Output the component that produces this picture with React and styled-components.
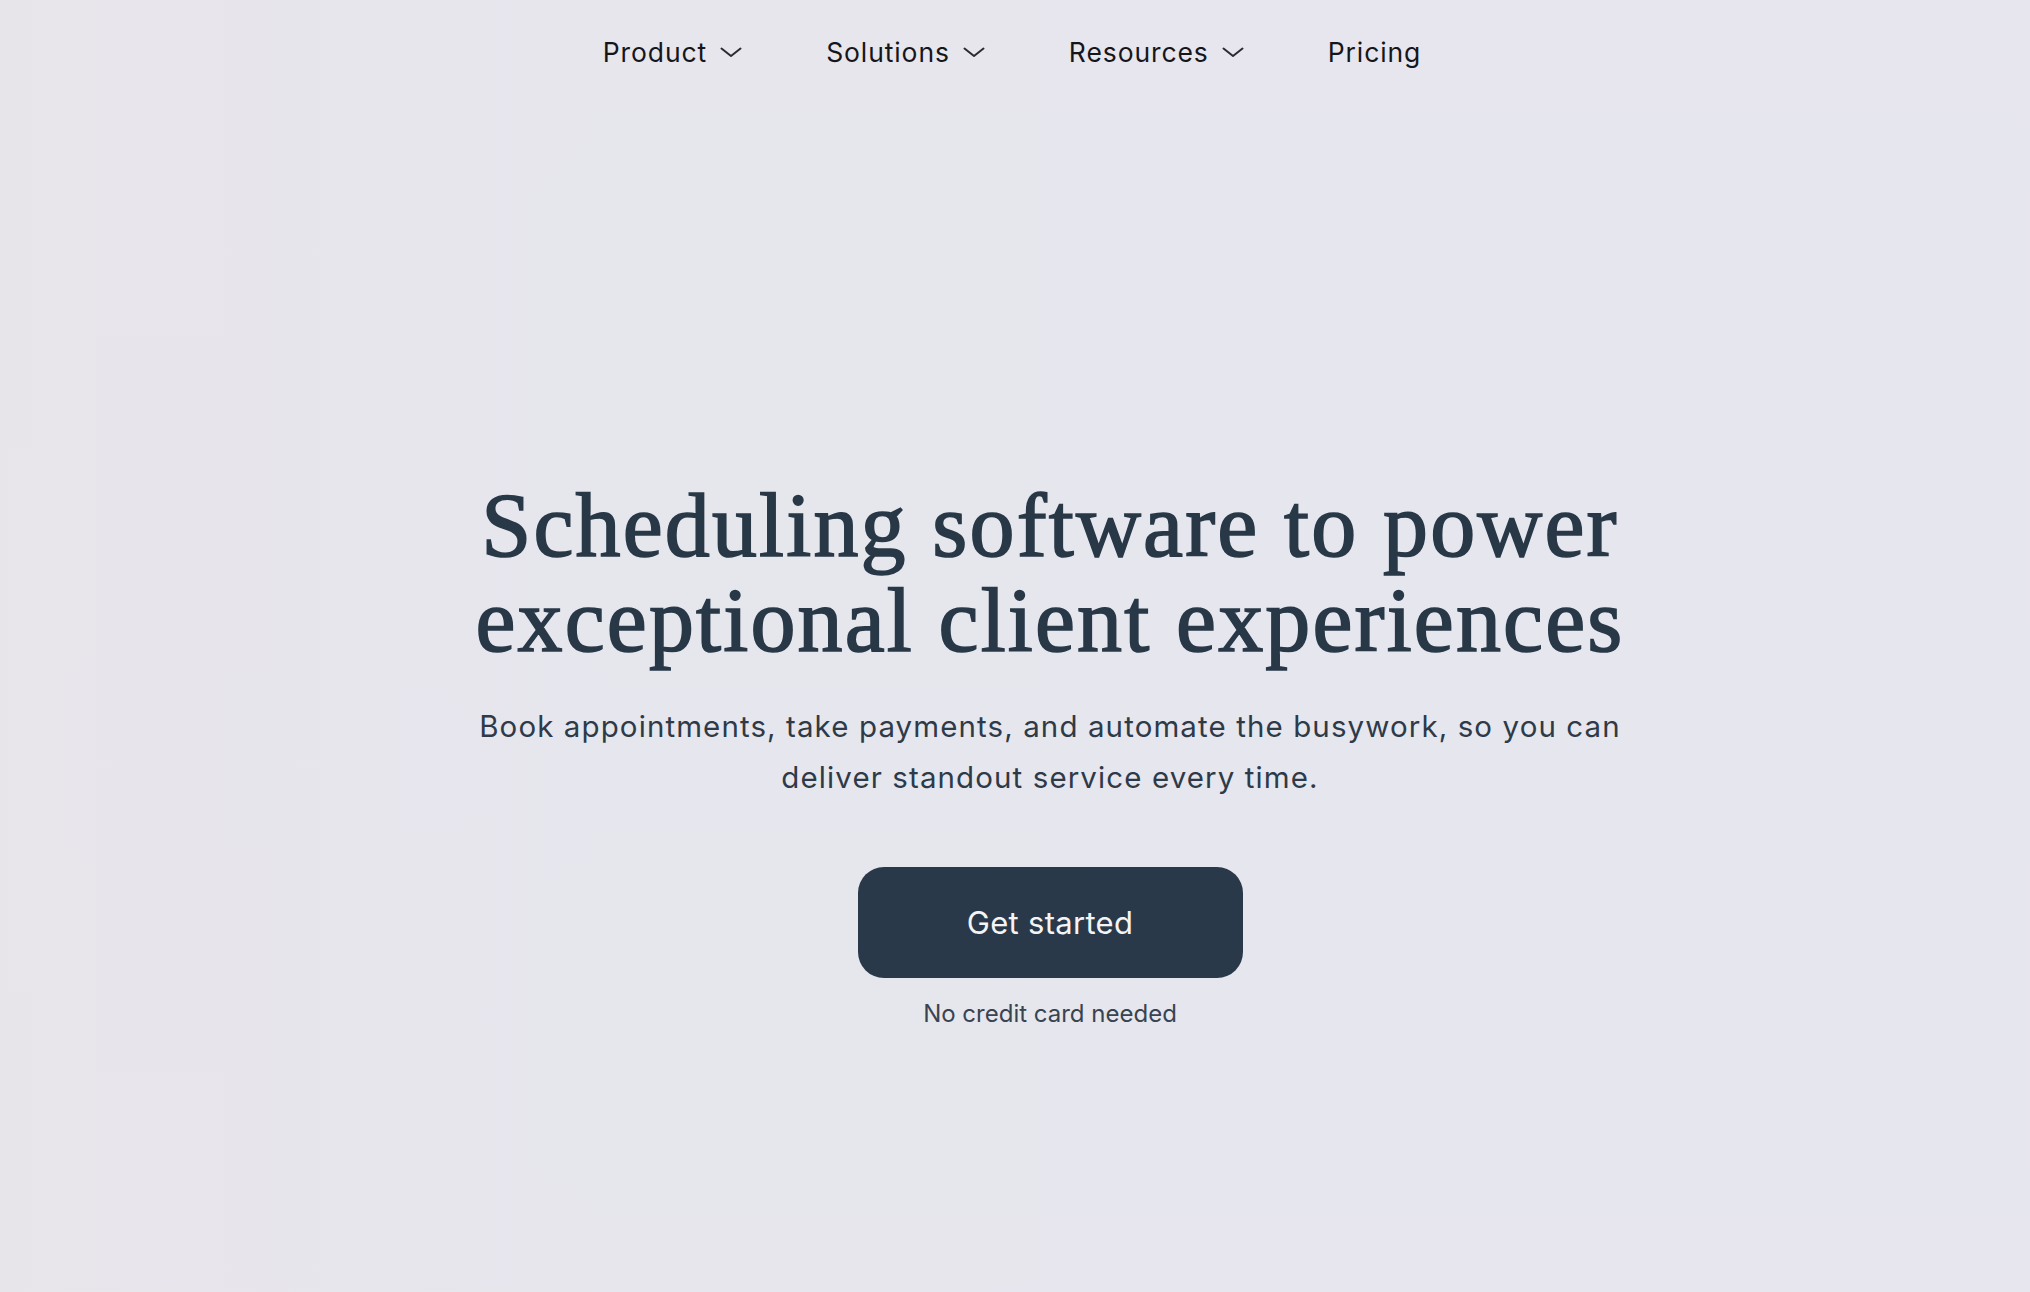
import React from 'react';
import styled, { createGlobalStyle } from 'styled-components';

const GlobalStyle = createGlobalStyle`
    html, body {
        margin: 0;
        padding: 0;
    }
    body {
        font-family: Inter, 'Noto Sans', sans-serif;
        background: #e6e5ee;
    }
    * {
        box-sizing: border-box;
    }
`;

const navItems = [
    { label: 'Product', menu: true },
    { label: 'Solutions', menu: true },
    { label: 'Resources', menu: true },
    { label: 'Pricing', menu: false },
];

const Chevron = () => (
    <svg width='22' height='11' viewBox='0 0 22 11' fill='none'>
        <path
            d='M1.5 1.5 L11 9 L20.5 1.5'
            stroke='#2b2b30'
            strokeWidth='2'
            strokeLinecap='round'
            strokeLinejoin='round'
        />
    </svg>
);

const App = () => {
    return (
        <Page>
            <GlobalStyle />
            <NavBar>
                <NavList>
                    {navItems.map(({ label, menu }) => (
                        <NavItem key={label}>
                            <span>{label}</span>
                            {menu && <Chevron />}
                        </NavItem>
                    ))}
                </NavList>
            </NavBar>
            <Hero>
                <Headline>
                    Scheduling software to power
                    <br />
                    exceptional client experiences
                </Headline>
                <Lead>
                    Book appointments, take payments, and automate the
                    busywork, so you can deliver standout service every time.
                </Lead>
                <CtaButton>Get started</CtaButton>
                <Note>No credit card needed</Note>
            </Hero>
        </Page>
    );
};

export default App;

const Page = styled.div`
    min-height: 100vh;
    width: 100%;
    background:
        linear-gradient(90deg, rgba(232, 229, 234, 0.9) 0%, rgba(231, 230, 237, 0.4) 30%, rgba(230, 230, 240, 0) 60%),
        linear-gradient(180deg, #e7e6ee 0%, #e6e6ef 60%, #e7e6ee 100%);
    display: flex;
    flex-direction: column;
`;

const NavBar = styled.nav`
    display: flex;
    justify-content: center;
    padding: 32px 6px 0 0;
`;

const NavList = styled.ul`
    list-style: none;
    margin: 0;
    padding: 0;
    display: flex;
    align-items: center;
    gap: 84px;
`;

const NavItem = styled.li`
    display: flex;
    align-items: center;
    gap: 13px;
    font-size: 26.5px;
    line-height: 40px;
    color: #16161a;
    letter-spacing: 0.9px;
    cursor: pointer;

    svg {
        margin-top: 1px;
    }
`;

const Hero = styled.main`
    display: flex;
    flex-direction: column;
    align-items: center;
    text-align: center;
    padding: 406px 0 0 70px;
`;

const Headline = styled.h1`
    margin: 0;
    font-family: 'Liberation Serif', 'Times New Roman', serif;
    font-weight: 400;
    font-size: 90px;
    line-height: 95px;
    color: #283847;
    letter-spacing: 2.15px;
    -webkit-text-stroke: 1.6px #283847;
`;

const Lead = styled.p`
    margin: 33px 0 0;
    max-width: 1160px;
    font-size: 29.5px;
    line-height: 51px;
    letter-spacing: 1.1px;
    color: #2e3a48;
`;

const CtaButton = styled.button`
    margin-top: 64px;
    width: 385px;
    height: 111px;
    border: none;
    border-radius: 26px;
    background: #2a3949;
    color: #f4f4f7;
    font-family: Inter, 'Noto Sans', sans-serif;
    font-size: 31px;
    letter-spacing: 0.3px;
    cursor: pointer;
`;

const Note = styled.p`
    margin: 20px 0 0;
    font-size: 24px;
    line-height: 32px;
    color: #3a4350;
`;
